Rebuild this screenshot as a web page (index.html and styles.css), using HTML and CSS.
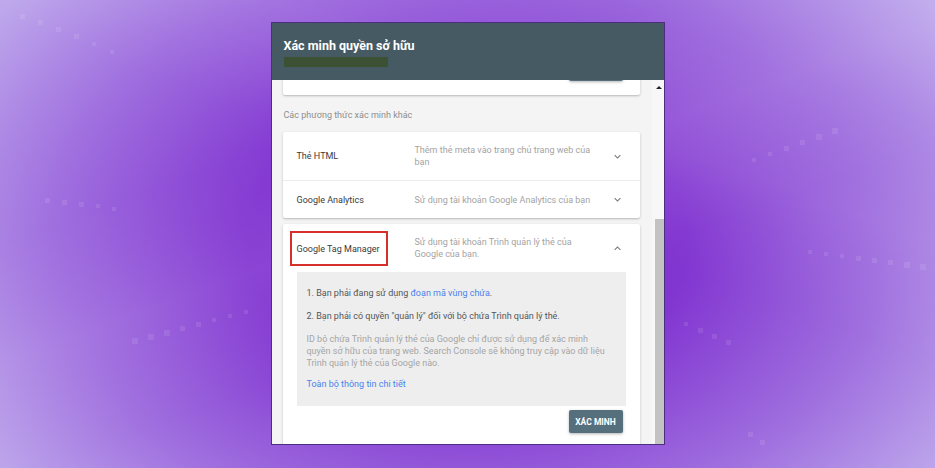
FILE: index.html
```html
<!DOCTYPE html>
<html lang="vi">
<head>
  <meta charset="UTF-8">
  <title>Xác minh quyền sở hữu</title>
  <link rel="stylesheet" href="styles.css">
</head>
<body>
  <div class="stage">
    <svg class="stage-dots" width="935" height="468" viewBox="0 0 935 468">
      <g fill="#ffffff" opacity="0.09">
        <rect x="20" y="14" width="5" height="5"/><rect x="38" y="20" width="5" height="5"/>
        <rect x="56" y="27" width="5" height="5"/><rect x="74" y="34" width="5" height="5"/>
        <rect x="92" y="42" width="4" height="4"/><rect x="110" y="50" width="4" height="4"/>
        <rect x="45" y="198" width="5" height="5"/><rect x="62" y="200" width="5" height="5"/>
        <rect x="79" y="202" width="5" height="5"/><rect x="96" y="204" width="4" height="4"/>
        <rect x="112" y="207" width="4" height="4"/>
        <rect x="132" y="338" width="6" height="6"/><rect x="148" y="334" width="6" height="6"/>
        <rect x="164" y="330" width="6" height="6"/><rect x="180" y="326" width="5" height="5"/>
        <rect x="196" y="322" width="5" height="5"/><rect x="212" y="318" width="4" height="4"/>
        <rect x="228" y="314" width="4" height="4"/><rect x="244" y="310" width="4" height="4"/>
        <rect x="832" y="128" width="6" height="6"/><rect x="816" y="134" width="6" height="6"/>
        <rect x="800" y="140" width="5" height="5"/><rect x="784" y="146" width="5" height="5"/>
        <rect x="768" y="152" width="4" height="4"/><rect x="752" y="158" width="4" height="4"/>
        <rect x="920" y="264" width="6" height="6"/><rect x="904" y="262" width="6" height="6"/>
        <rect x="888" y="260" width="5" height="5"/><rect x="872" y="258" width="5" height="5"/>
        <rect x="856" y="256" width="5" height="5"/><rect x="840" y="254" width="4" height="4"/>
        <rect x="824" y="252" width="4" height="4"/><rect x="808" y="250" width="4" height="4"/>
        <rect x="684" y="322" width="4" height="4"/><rect x="698" y="328" width="5" height="5"/>
        <rect x="712" y="334" width="5" height="5"/><rect x="726" y="340" width="5" height="5"/>
        <rect x="760" y="440" width="5" height="5"/><rect x="748" y="432" width="5" height="5"/>
      </g>
    </svg>

    <div class="dialog">
      <div class="dialog-header">
        <div class="dialog-title">Xác minh quyền sở hữu</div>
        <div class="redacted"></div>
      </div>

      <div class="dialog-body">
        <div class="scroll-content">
          <div class="card card-cut">
            <span class="btn btn-cut"></span>
          </div>

          <div class="section-label">Các phương thức xác minh khác</div>

          <div class="card">
            <div class="method-row">
              <div class="method-name">Thẻ HTML</div>
              <div class="method-desc">Thêm thẻ meta vào trang chủ trang web của bạn</div>
              <svg class="chevron" viewBox="0 0 24 24"><path d="M7.41 8.59L12 13.17l4.59-4.58L18 10l-6 6-6-6z"/></svg>
            </div>
            <div class="method-row">
              <div class="method-name">Google Analytics</div>
              <div class="method-desc">Sử dụng tài khoản Google Analytics của bạn</div>
              <svg class="chevron" viewBox="0 0 24 24"><path d="M7.41 8.59L12 13.17l4.59-4.58L18 10l-6 6-6-6z"/></svg>
            </div>
          </div>

          <div class="card card-open">
            <div class="method-row">
              <div class="method-name"><span class="highlight">Google Tag Manager</span></div>
              <div class="method-desc">Sử dụng tài khoản Trình quản lý thẻ của Google của bạn.</div>
              <svg class="chevron" viewBox="0 0 24 24"><path d="M7.41 15.41L12 10.83l4.59 4.58L18 14l-6-6-6 6z"/></svg>
            </div>
            <div class="method-panel">
              <p class="step">1. Bạn phải đang sử dụng <a href="#">đoạn mã vùng chứa</a>.</p>
              <p class="step">2. Bạn phải có quyền "quản lý" đối với bộ chứa Trình quản lý thẻ.</p>
              <p class="note">ID bộ chứa Trình quản lý thẻ của Google chỉ được sử dụng để xác minh quyền sở hữu của trang web. Search Console sẽ không truy cập vào dữ liệu Trình quản lý thẻ của Google nào.</p>
              <a class="more" href="#">Toàn bộ thông tin chi tiết</a>
            </div>
            <div class="panel-actions">
              <button class="btn">XÁC MINH</button>
            </div>
          </div>
        </div>

        <div class="scrollbar">
          <div class="scroll-arrow"></div>
          <div class="scroll-thumb"></div>
        </div>
      </div>
    </div>
  </div>
</body>
</html>
```

FILE: styles.css
```css
html, body {
  margin: 0;
  padding: 0;
}
body {
  font-family: Roboto, "Noto Sans", Arial, sans-serif;
  width: 935px;
  height: 468px;
  overflow: hidden;
}
.stage {
  position: relative;
  width: 935px;
  height: 468px;
  display: flex;
  align-items: center;
  justify-content: center;
  background:
    linear-gradient(160deg, rgba(255,255,255,0) 30%, rgba(255,255,255,0.07) 45%, rgba(255,255,255,0) 60%),
    linear-gradient(20deg, rgba(255,255,255,0) 55%, rgba(255,255,255,0.06) 70%, rgba(255,255,255,0) 85%),
    radial-gradient(ellipse 62% 85% at 50% 52%, #7a2bcc 0%, #8236d1 38%, #a070df 72%, #bea8ec 100%);
}
.stage-dots {
  position: absolute;
  left: 0;
  top: 0;
}
.dialog {
  position: relative;
  width: 392px;
  height: 421px;
  border: 1px solid #4d2d82;
  background: #f4f4f4;
  display: flex;
  flex-direction: column;
  overflow: hidden;
  margin-top: -1px;
}
.dialog-header {
  background-color: #465a63;
  height: 57px;
  padding: 15px 12px 0;
  box-sizing: border-box;
  flex-shrink: 0;
}
.dialog-title {
  color: #fff;
  font-size: 12.5px;
  font-weight: 700;
  line-height: 15px;
}
.redacted {
  width: 104px;
  height: 10px;
  margin-top: 4px;
  background-color: #3c5034;
}
.dialog-body {
  flex: 1;
  display: flex;
  overflow: hidden;
}
.scroll-content {
  flex: 1;
  padding: 0 12px 0 11px;
  overflow: hidden;
}
.scrollbar {
  width: 12px;
  background: #f7f7f7;
  display: flex;
  flex-direction: column;
  align-items: flex-end;
}
.scroll-arrow {
  width: 0;
  height: 0;
  margin: 6px 2px 0 0;
  border-left: 3px solid transparent;
  border-right: 3px solid transparent;
  border-bottom: 3px solid #222;
}
.scroll-thumb {
  width: 9px;
  height: 230px;
  margin-top: 130px;
  background: #c3c3c3;
}
.card {
  background: #fff;
  border-radius: 2px;
  box-shadow: 0 1px 3px rgba(0,0,0,0.18), 0 1px 1px rgba(0,0,0,0.08);
}
.card-cut {
  height: 45px;
  margin-top: -30px;
  padding: 8px 17px 0 0;
  box-sizing: border-box;
  display: flex;
  justify-content: flex-end;
}
.btn-cut {
  display: block;
  width: 53px;
  height: 26px;
  background: #6f7d84;
  border-radius: 2px;
  box-shadow: 0 1px 3px rgba(0,0,0,0.3);
}
.section-label {
  font-size: 9px;
  line-height: 12px;
  color: #8e8e8e;
  margin: 14px 0 11px 1px;
}
.method-row {
  display: flex;
  align-items: center;
  padding: 12px 16px 12px 14px;
  font-size: 9px;
  line-height: 12px;
}
.method-row + .method-row {
  border-top: 1px solid #ececec;
}
.method-name {
  width: 118px;
  flex-shrink: 0;
  color: #3a3a3a;
}
.method-desc {
  width: 186px;
  color: #a3a3a3;
}
.chevron {
  width: 13px;
  height: 13px;
  margin-left: auto;
  fill: #7a7a7a;
}
.card-open {
  margin-top: 6px;
  padding-bottom: 14px;
}
.highlight {
  display: inline-block;
  padding: 10px 6px 9px 5px;
  margin: -8px 0 -8px -7px;
  border: 2px solid #d7302b;
}
.method-panel {
  margin: 0 14px;
  padding: 15px 10px 16px;
  background: #eeeeee;
  font-size: 9px;
  line-height: 12px;
}
.method-panel p {
  margin: 0 0 11px;
}
.step {
  color: #555;
}
.note {
  color: #a5a5a5;
  padding-right: 8px;
}
.method-panel .note {
  margin-bottom: 9px;
}
.method-panel a {
  color: #4a82ea;
  text-decoration: none;
}
.more {
  display: block;
}
.panel-actions {
  display: flex;
  justify-content: flex-end;
  padding: 4px 17px 0;
}
.btn {
  width: 54px;
  height: 23px;
  border: none;
  border-radius: 2px;
  background: #55707c;
  color: #fff;
  font-family: Roboto, Arial, sans-serif;
  font-size: 8.5px;
  font-weight: 700;
  padding: 0;
  box-shadow: 0 1px 3px rgba(0,0,0,0.3);
}
```
